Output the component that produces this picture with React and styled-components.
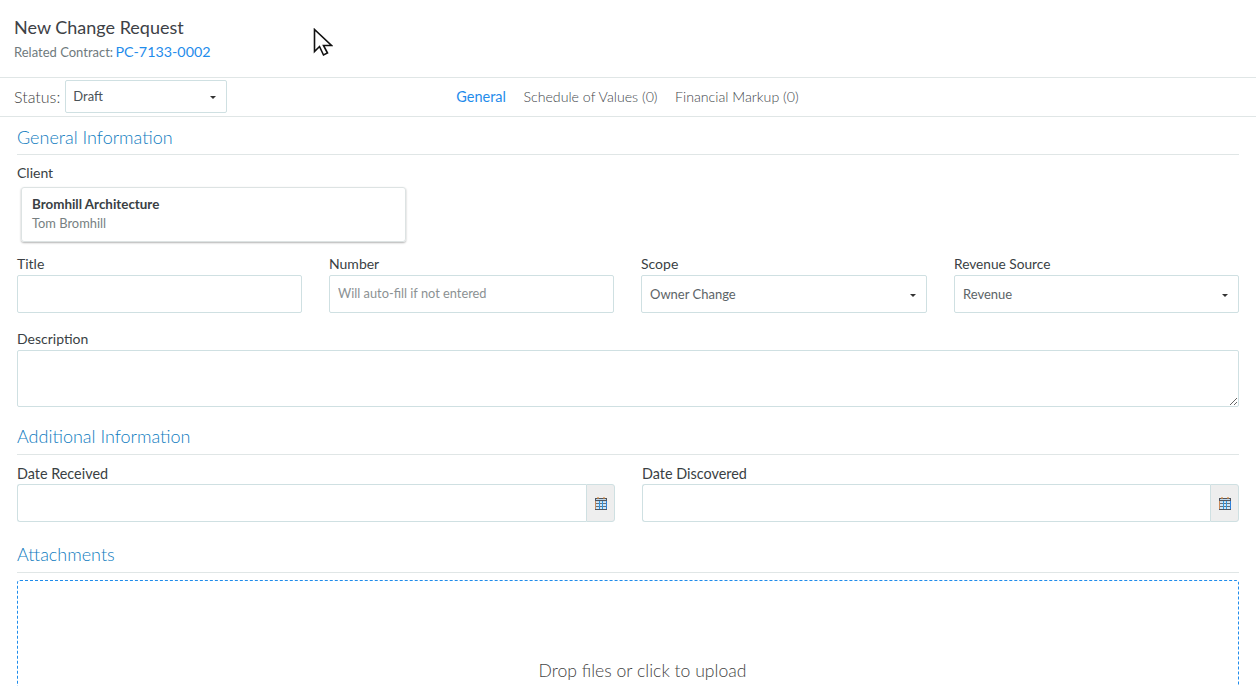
import React from "react";
import styled, { createGlobalStyle } from "styled-components";

const GlobalStyle = createGlobalStyle`
  html, body {
    margin: 0;
    padding: 0;
    background: #fff;
    font-family: Lato, "Open Sans", sans-serif;
    color: #3a3f44;
  }
  * {
    box-sizing: border-box;
  }
`;

const CalendarIcon = () => (
  <svg width="14" height="15" viewBox="0 0 14 15">
    <rect x="1.5" y="2.5" width="11" height="11" fill="#cfe6f8" stroke="#4f5560" strokeWidth="1" />
    <path d="M1.5 4.5h11" stroke="#4f5560" strokeWidth="1.2" />
    <path d="M4 1v2M10 1v2" stroke="#d98a3e" strokeWidth="1.2" />
    <path d="M2 7.5h10M2 10.5h10" stroke="#6a6f78" strokeWidth="1" />
    <path d="M5.5 5v8M8.5 5v8" stroke="#2f95e0" strokeWidth="1" />
    <path d="M12.5 5v8" stroke="#2f80d8" strokeWidth="1" />
    <path d="M1.5 5v8" stroke="#c98a5a" strokeWidth="1" />
  </svg>
);

const Cursor = () => (
  <CursorWrap width="20" height="30" viewBox="0 0 20 30">
    <path
      d="M1.5 1.5V23.5L6.5 18.5L10.5 27L14.5 25L10.5 17.5H18.5Z"
      fill="#fff"
      stroke="#111"
      strokeWidth="1.6"
      strokeLinejoin="miter"
    />
  </CursorWrap>
);

const Select = ({ value }) => (
  <SelectBox>
    <span>{value}</span>
    <Caret />
  </SelectBox>
);

const Field = ({ label, size, children }) => (
  <FieldWrap>
    <Label $size={size}>{label}</Label>
    {children}
  </FieldWrap>
);

const DateField = ({ label }) => (
  <Field label={label} size={14.4}>
    <DateGroup>
      <DateInput />
      <DateAddon>
        <CalendarIcon />
      </DateAddon>
    </DateGroup>
  </Field>
);

const App = () => {
  return (
    <Page>
      <GlobalStyle />
      <Header>
        <Title>New Change Request</Title>
        <Related>
          Related Contract: <ContractLink>PC-7133-0002</ContractLink>
        </Related>
        <Cursor />
      </Header>

      <Toolbar>
        <StatusWrap>
          <StatusLabel>Status:</StatusLabel>
          <StatusSelect>
            <span>Draft</span>
            <Caret />
          </StatusSelect>
        </StatusWrap>
        <Tabs>
          <Tab $active>General</Tab>
          <Tab>Schedule of Values (0)</Tab>
          <Tab>Financial Markup (0)</Tab>
        </Tabs>
      </Toolbar>

      <Content>
        <SectionTitle>General Information</SectionTitle>
        <ClientLabel>Client</ClientLabel>
        <ClientCard>
          <ClientName>Bromhill Architecture</ClientName>
          <ClientContact>Tom Bromhill</ClientContact>
        </ClientCard>

        <FourCols>
          <Field label="Title">
            <Input />
          </Field>
          <Field label="Number">
            <Input placeholder="Will auto-fill if not entered" />
          </Field>
          <Field label="Scope">
            <Select value="Owner Change" />
          </Field>
          <Field label="Revenue Source" size={13.7}>
            <Select value="Revenue" />
          </Field>
        </FourCols>

        <DescriptionRow>
          <Field label="Description">
            <TextArea />
          </Field>
        </DescriptionRow>

        <SectionTitle $top={18} $lh={22}>Additional Information</SectionTitle>
        <TwoCols>
          <DateField label="Date Received" />
          <DateField label="Date Discovered" />
        </TwoCols>

        <SectionTitle $top={21} $lh={22}>Attachments</SectionTitle>
        <DropZone>Drop files or click to upload</DropZone>
      </Content>
    </Page>
  );
};
export default App;

const Page = styled.div`
  width: 100%;
  height: 686px;
  overflow: hidden;
  background: #fff;
`;
const Header = styled.div`
  position: relative;
  height: 78px;
  padding: 16px 14px 0;
  border-bottom: 1px solid #e0e6e6;
`;
const Title = styled.div`
  font-size: 18px;
  line-height: 22px;
  color: #3d4146;
`;
const Related = styled.div`
  margin-top: 4px;
  font-size: 13px;
  line-height: 20px;
  color: #6f7a7d;
`;
const ContractLink = styled.span`
  margin-left: -1px;
  font-size: 14.3px;
  color: #1f8ceb;
`;
const CursorWrap = styled.svg`
  position: absolute;
  left: 313px;
  top: 28px;
`;
const Toolbar = styled.div`
  height: 39px;
  display: flex;
  align-items: center;
  padding: 0 14px 2px;
  border-bottom: 1px solid #e0e6e6;
`;
const StatusWrap = styled.div`
  display: flex;
  align-items: center;
  gap: 5px;
`;
const StatusLabel = styled.span`
  font-size: 16px;
  font-weight: 300;
  color: #444;
`;
const StatusSelect = styled.div`
  width: 162px;
  height: 33px;
  display: flex;
  align-items: center;
  justify-content: space-between;
  padding: 0 10px 0 7px;
  border: 1px solid #cfe0e2;
  border-radius: 2px;
  font-size: 13px;
  color: #4a5257;
`;
const Tabs = styled.div`
  margin-left: 229px;
  display: flex;
  gap: 17.5px;
`;
const Tab = styled.span`
  font-size: ${(p) => (p.$active ? 14.5 : 14.2)}px;
  font-weight: ${(p) => (p.$active ? 400 : 300)};
  color: ${(p) => (p.$active ? "#1f8ceb" : "#44484c")};
`;
const Content = styled.div`
  padding: 8px 17px 0;
`;
const SectionTitle = styled.div`
  margin-top: ${(p) => p.$top || 0}px;
  height: 30px;
  line-height: ${(p) => p.$lh || 24}px;
  font-size: 18px;
  font-weight: 300;
  color: #0f7cc0;
  border-bottom: 1px solid #e0e6e6;
`;
const ClientLabel = styled.div`
  margin-top: 9px;
  font-size: 14px;
  line-height: 18px;
  color: #3a3f44;
`;
const ClientCard = styled.div`
  width: 385px;
  height: 55px;
  margin: 5px 0 0 4px;
  padding: 7px 10px;
  border: 1px solid #dde3e3;
  border-radius: 3px;
  box-shadow: 0 1px 2px rgba(0, 0, 0, 0.3);
`;
const ClientName = styled.div`
  font-size: 13.4px;
  font-weight: 700;
  line-height: 18px;
  color: #3a3f44;
`;
const ClientContact = styled.div`
  margin-top: 1px;
  font-size: 12.9px;
  line-height: 18px;
  color: #777f82;
`;
const FourCols = styled.div`
  margin-top: 13px;
  display: grid;
  grid-template-columns: 285px 285px 286px 285px;
  column-gap: 27px;
`;
const TwoCols = styled.div`
  margin-top: 10px;
  display: grid;
  grid-template-columns: 598px 597px;
  column-gap: 27px;
`;
const DescriptionRow = styled.div`
  margin-top: 17px;
`;
const FieldWrap = styled.div`
  display: flex;
  flex-direction: column;
`;
const Label = styled.label`
  font-size: ${(p) => p.$size || 14}px;
  line-height: 18px;
  margin-bottom: 2px;
  color: #3a3f44;
`;
const Input = styled.input`
  width: 100%;
  height: 38px;
  padding: 0 8px 2px;
  border: 1px solid #cfe0e2;
  border-radius: 2px;
  outline: none;
  font-family: inherit;
  font-size: 12.8px;
  &::placeholder {
    color: #8b9193;
    opacity: 1;
  }
`;
const SelectBox = styled.div`
  height: 38px;
  display: flex;
  align-items: center;
  justify-content: space-between;
  padding: 0 10px 0 8px;
  border: 1px solid #cfe0e2;
  border-radius: 2px;
  font-size: 13px;
  color: #5c6467;
`;
const Caret = styled.i`
  width: 0;
  height: 0;
  border-left: 3px solid transparent;
  border-right: 3px solid transparent;
  border-top: 3px solid #333;
  margin-top: 2px;
`;
const TextArea = styled.textarea`
  display: block;
  width: 100%;
  height: 57px;
  border: 1px solid #cfe0e2;
  border-radius: 2px;
  outline: none;
`;
const DateGroup = styled.div`
  display: flex;
  height: 38px;
  margin-top: -1px;
`;
const DateInput = styled.input`
  flex: 1;
  min-width: 0;
  border: 1px solid #cfe0e2;
  border-right: 0;
  border-radius: 3px 0 0 3px;
  outline: none;
`;
const DateAddon = styled.div`
  width: 29px;
  display: flex;
  align-items: center;
  justify-content: center;
  background: #eeeeee;
  border: 1px solid #cfe0e2;
  border-radius: 0 3px 3px 0;
`;
const DropZone = styled.div`
  margin-top: 7px;
  height: 180px;
  padding: 78px 0 0 29px;
  text-align: center;
  font-size: 17.6px;
  font-weight: 300;
  line-height: 24px;
  color: #444;
  border: 1px dashed #1f8ceb;
  border-radius: 3px;
`;
